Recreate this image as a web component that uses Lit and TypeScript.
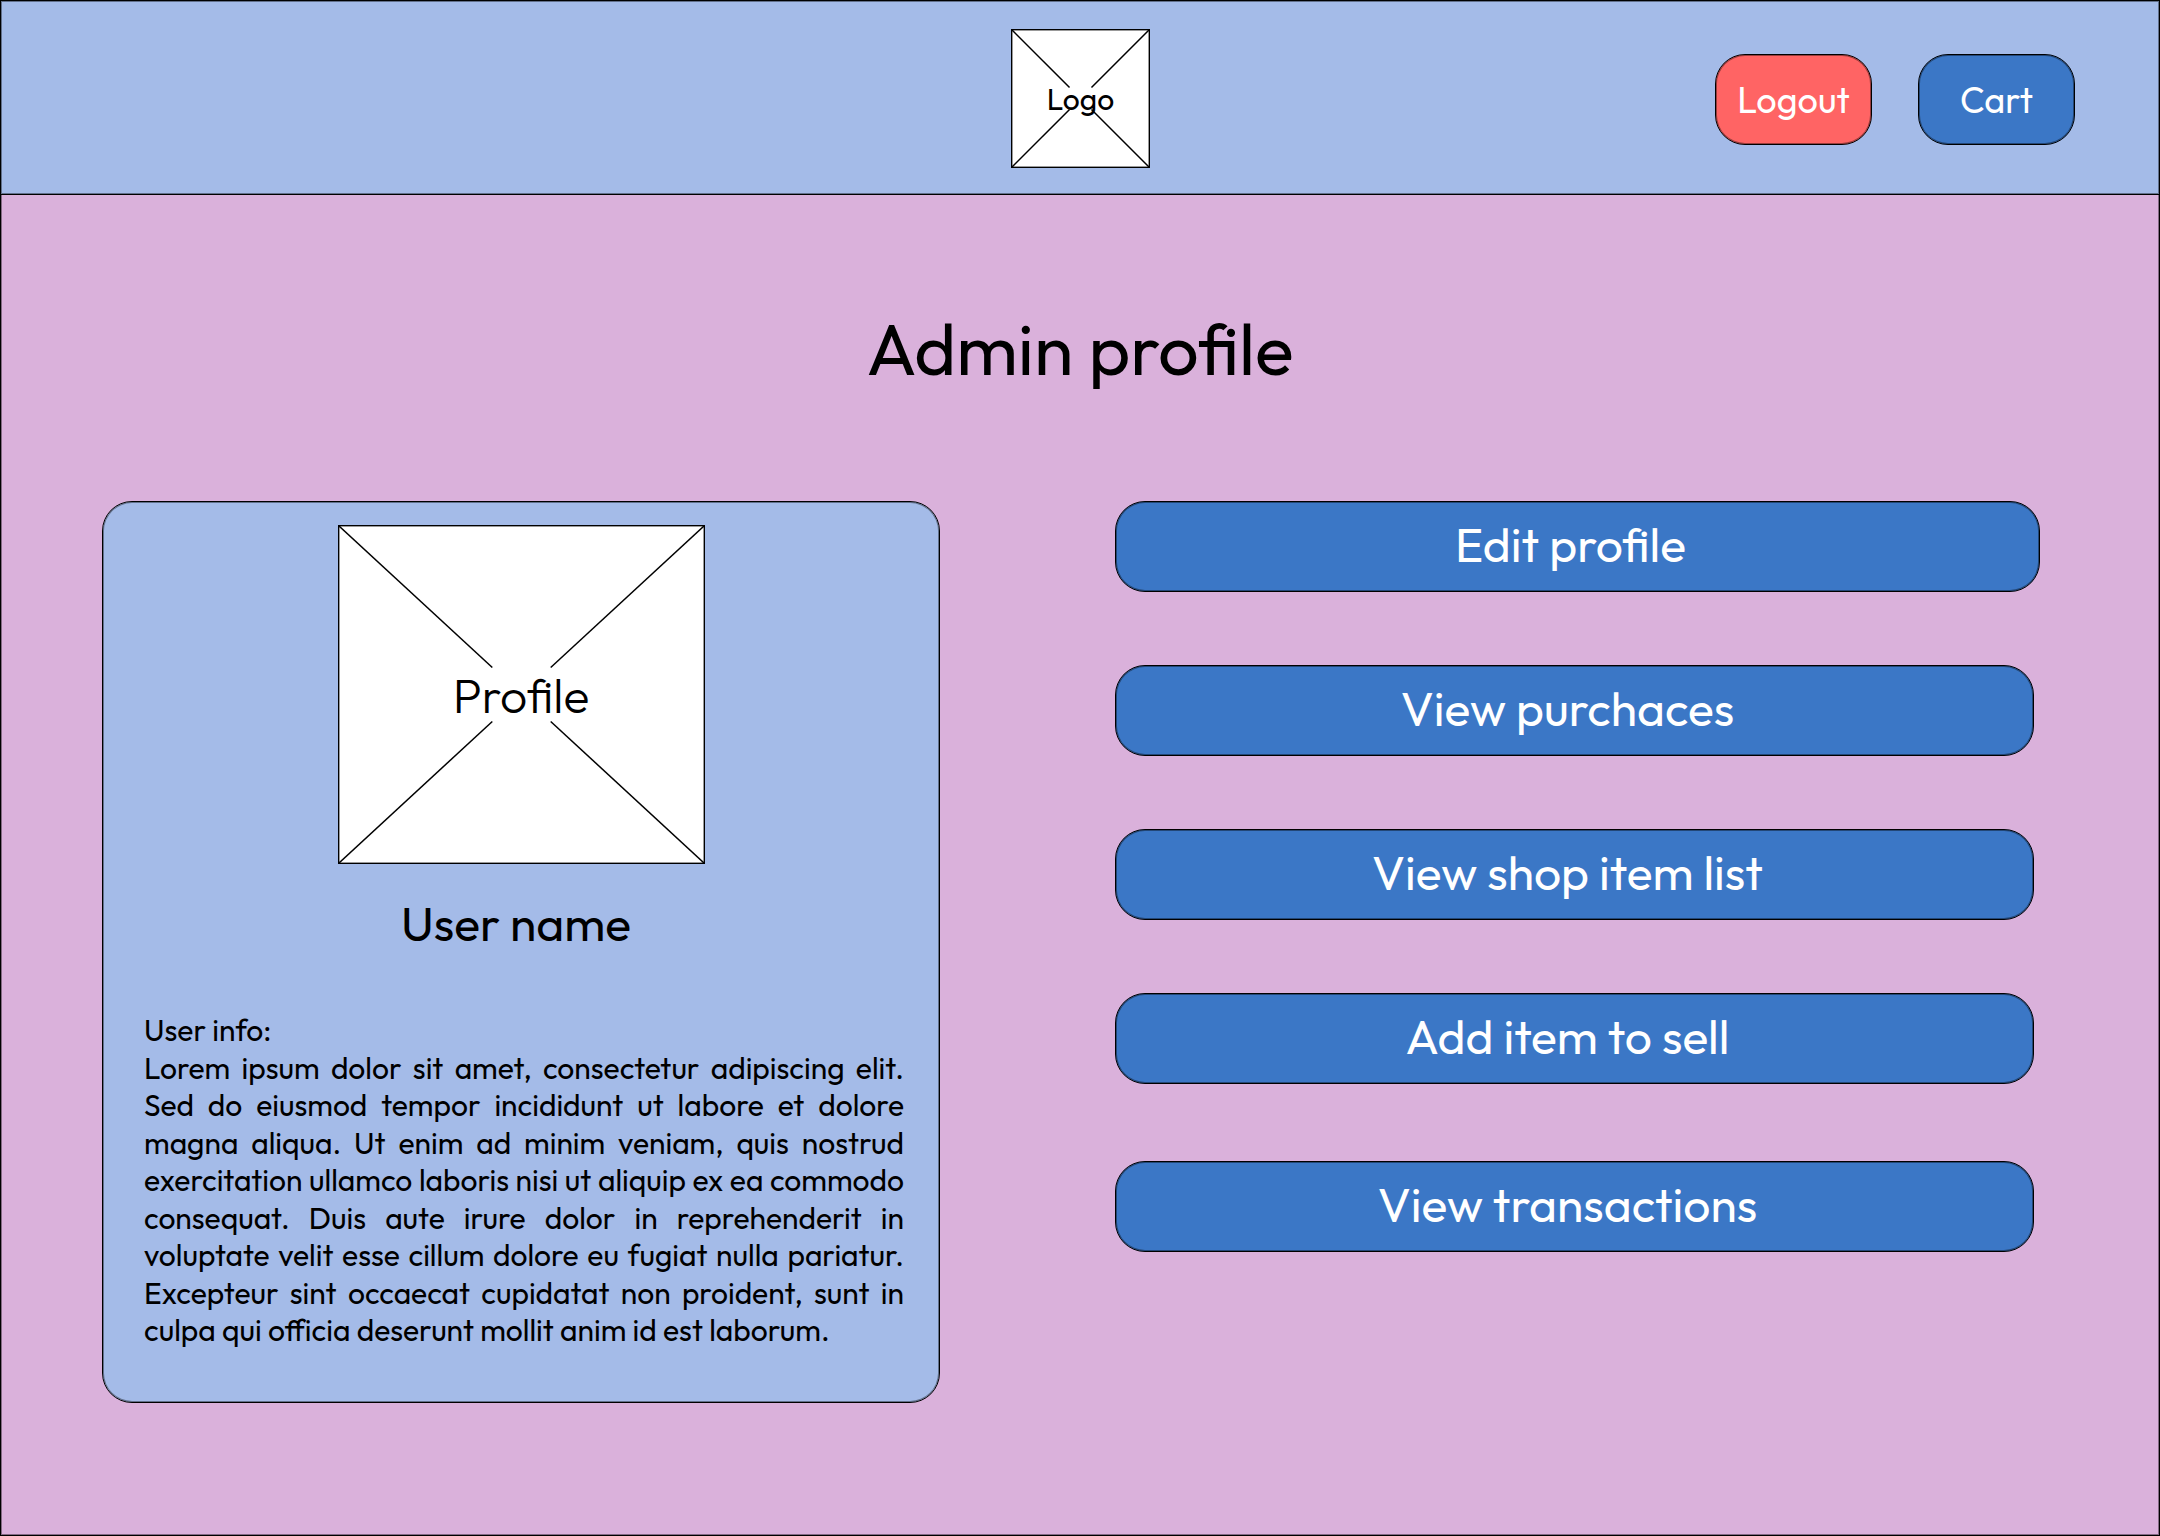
import { LitElement, html, css } from "lit";
import { customElement, property } from "lit/decorators.js";

/** White crossed-out frame with a caption in the gap of the cross. */
@customElement("image-placeholder")
export class ImagePlaceholder extends LitElement {
  @property() label = "";

  static styles = css`
    :host {
      display: grid;
      box-sizing: border-box;
      border: 1px solid #000;
      background: #fff;
      box-shadow: inset 0 0 0 1px rgba(0, 0, 0, 0.4);
    }
    .cross,
    .label {
      grid-area: 1 / 1;
      width: 100%;
      height: 100%;
      min-height: 0;
    }
    .cross {
      display: block;
      overflow: hidden;
      stroke: #000;
      stroke-width: 1.5px;
    }
    .label {
      display: flex;
      align-items: center;
      justify-content: center;
    }
  `;

  render() {
    return html`
      <svg class="cross" aria-hidden="true">
        <line x1="0%" y1="0%" x2="42%" y2="42%"></line>
        <line x1="100%" y1="0%" x2="58%" y2="42%"></line>
        <line x1="0%" y1="100%" x2="42%" y2="58%"></line>
        <line x1="100%" y1="100%" x2="58%" y2="58%"></line>
      </svg>
      <span class="label">${this.label}</span>
    `;
  }
}

@customElement("app-root")
export class AppRoot extends LitElement {
  private actions = [
    "Edit profile",
    "View purchaces",
    "View shop item list",
    "Add item to sell",
    "View transactions",
  ];

  static styles = css`
    :host {
      display: block;
      font-family: Outfit, Lato, "Liberation Sans", sans-serif;
      color: #000;
    }
    .page {
      box-sizing: border-box;
      min-height: 100vh;
      border: 1px solid #000;
      background: #dab1db;
      box-shadow: inset 0 0 0 1px rgba(0, 0, 0, 0.4);
    }
    .header {
      display: grid;
      grid-template-columns: 1fr auto 1fr;
      align-items: center;
      padding: 28px 84px 26px 85px;
      border-bottom: 1px solid #000;
      background: #a4bbe8;
      box-shadow: inset 0 0 0 1px rgba(0, 0, 0, 0.4);
    }
    .logo {
      grid-column: 2;
      width: 139px;
      height: 139px;
      font-size: 30px;
    }
    .nav {
      display: flex;
      justify-content: flex-end;
      gap: 46px;
      padding-top: 2px;
    }
    button {
      box-sizing: border-box;
      height: 91px;
      border: 1px solid #000;
      border-radius: 30px;
      background: #3b77c6;
      color: #fff;
      font: inherit;
      cursor: pointer;
      box-shadow: inset 0 0 0 1px rgba(0, 0, 0, 0.4);
    }
    .nav button {
      width: 157px;
      padding: 0;
      font-size: 36px;
    }
    .nav .logout {
      background: #ff6464;
    }
    h1 {
      margin: 0;
      padding: 109px 0 107px;
      font-size: 72px;
      line-height: 90px;
      font-weight: 400;
      text-align: center;
    }
    .columns {
      display: grid;
      grid-template-columns: 838fr 925fr;
      gap: 175px;
      align-items: start;
      padding: 0 119px 60px 101px;
    }
    .card {
      display: flex;
      flex-direction: column;
      align-items: center;
      padding: 23px 35px 52px;
      border: 1px solid #000;
      border-radius: 30px;
      background: #a4bbe8;
      box-shadow: inset 0 0 0 1px rgba(0, 0, 0, 0.4);
    }
    .photo {
      width: 367px;
      height: 339px;
      font-size: 48px;
      font-weight: 300;
    }
    h2 {
      margin: 29px 0 59px;
      padding-right: 10px;
      font-size: 48px;
      line-height: 60px;
      font-weight: 400;
    }
    .info {
      box-sizing: border-box;
      width: 100%;
      padding-left: 6px;
      font-size: 30px;
      line-height: 1.25;
    }
    .info p {
      margin: 0;
      text-align: justify;
    }
    .actions {
      display: flex;
      flex-direction: column;
      gap: 73px;
    }
    .actions button {
      margin-right: 6px;
      padding: 0 14px 6px 0;
      font-size: 48px;
    }
    .actions button:first-child {
      margin-right: 0;
    }
    .actions button:last-child {
      margin-top: 4px;
    }
  `;

  render() {
    return html`
      <div class="page">
        <header class="header">
          <image-placeholder class="logo" label="Logo"></image-placeholder>
          <nav class="nav">
            <button class="logout" type="button">Logout</button>
            <button type="button">Cart</button>
          </nav>
        </header>
        <main>
          <h1>Admin profile</h1>
          <div class="columns">
            <section class="card">
              <image-placeholder class="photo" label="Profile"></image-placeholder>
              <h2>User name</h2>
              <div class="info">
                <p>User info:</p>
                <p>
                  Lorem ipsum dolor sit amet, consectetur adipiscing elit. Sed do
                  eiusmod tempor incididunt ut labore et dolore magna aliqua. Ut
                  enim ad minim veniam, quis nostrud exercitation ullamco laboris
                  nisi ut aliquip ex ea commodo consequat. Duis aute irure dolor
                  in reprehenderit in voluptate velit esse cillum dolore eu fugiat
                  nulla pariatur. Excepteur sint occaecat cupidatat non proident,
                  sunt in culpa qui officia deserunt mollit anim id est laborum.
                </p>
              </div>
            </section>
            <div class="actions">
              ${this.actions.map((a) => html`<button type="button">${a}</button>`)}
            </div>
          </div>
        </main>
      </div>
    `;
  }
}
